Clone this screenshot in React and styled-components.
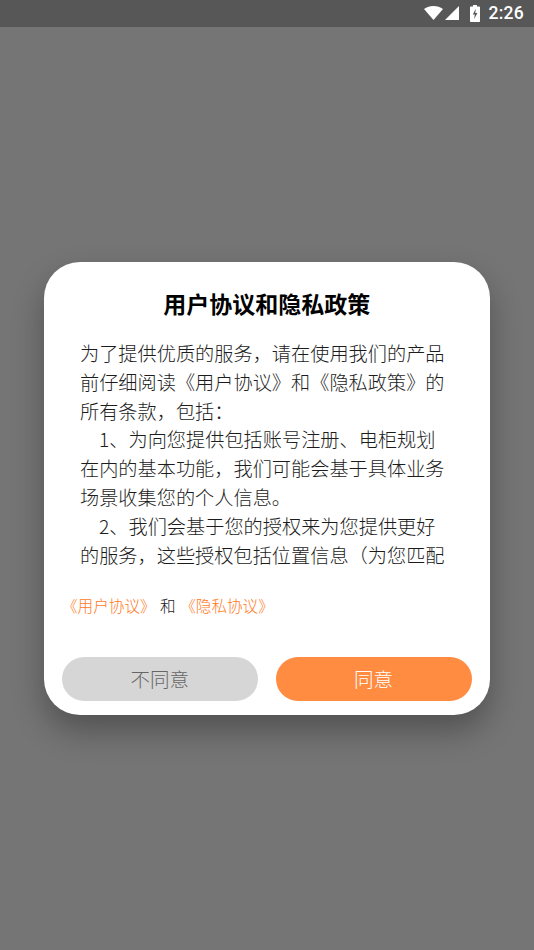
import styled, { createGlobalStyle } from "styled-components";

const GlobalStyle = createGlobalStyle`
    html, body {
        margin: 0;
        padding: 0;
        background: #757575;
    }
    * {
        box-sizing: border-box;
    }
`

const Page = styled.div`
    width: 534px;
    height: 950px;
    display: flex;
    flex-direction: column;
    overflow: hidden;
    background: #757575;
    font-family: "Roboto", "Noto Sans CJK SC", sans-serif;
`

const StatusBar = styled.div`
    height: 27px;
    flex-shrink: 0;
    display: flex;
    align-items: center;
    justify-content: flex-end;
    padding: 0 10px 1px 0;
    background: #575757;
    color: #fff;
`

const StatusIcon = styled.svg`
    margin-left: ${(props) => props.$left || 0}px;
    fill: #fff;
`

const Clock = styled.span`
    margin-left: 9px;
    font-size: 17.500px;
    font-weight: 500;
    letter-spacing: 0.25px;
`

const Overlay = styled.div`
    flex: 1;
    display: flex;
    padding: 235px 0 0 44px;
`

const Card = styled.div`
    width: 445.500px;
    height: 452.500px;
    display: flex;
    flex-direction: column;
    background: #fff;
    border-radius: 36px;
    box-shadow: 0 16px 32px rgba(0, 0, 0, 0.3);
`

const Title = styled.h2`
    margin: 25px 0 0;
    height: 32px;
    font-family: "Noto Sans CJK SC", sans-serif;
    font-size: 23px;
    line-height: 32px;
    font-weight: 700;
    text-align: center;
    color: #000;
`

const Body = styled.div`
    margin: 20px 0 0 36px;
    width: 366px;
    height: 230px;
    overflow: hidden;
    font-family: "Noto Sans CJK SC", sans-serif;
    font-size: 19.2px;
    font-weight: 300;
    line-height: 28.8px;
    color: #1c1c1c;
`

const Para = styled.p`
    margin: 0;
    text-indent: ${(props) => (props.$indent ? "19px" : "0")};
`

const Links = styled.div`
    margin: 25px 0 0 18px;
    display: flex;
    gap: 4.500px;
    font-family: "Noto Sans CJK SC", sans-serif;
    font-size: 15.600px;
    font-weight: 300;
    line-height: 22px;
    color: #1c1c1c;
`

const LinkText = styled.span`
    color: #ff7a24;
`

const Buttons = styled.div`
    margin: 41px 18px 0;
    display: flex;
    gap: 18px;
`

const Button = styled.div`
    flex: 1;
    height: 44px;
    display: flex;
    align-items: center;
    justify-content: center;
    border-radius: 22px;
    font-family: "Noto Sans CJK SC", sans-serif;
    font-size: 19.500px;
    font-weight: 300;
    padding-bottom: 2px;
    background: ${(props) => (props.$primary ? "#ff8c40" : "#d6d6d6")};
    color: ${(props) => (props.$primary ? "#fff" : "#666")};
`

const WifiIcon = () => (
    <StatusIcon width="19" height="14" viewBox="0 0 19 14">
        <path d="M0 3C2.700 1 5.900 0 9.500 0S16.300 1 19 3L9.500 14z" />
    </StatusIcon>
)

const SignalIcon = () => (
    <StatusIcon $left={2} width="14" height="14" viewBox="0 0 14 14">
        <path d="M14 0v14H0z" />
    </StatusIcon>
)

const BatteryIcon = () => (
    <StatusIcon $left={11} width="10" height="17" viewBox="0 0 10 17">
        <path d="M3 0h4v1.500h2.200a.8.8 0 0 1 .8.8v13.900a.8.8 0 0 1-.8.8H.8a.8.8 0 0 1-.8-.8V2.300a.8.8 0 0 1 .8-.8H3z" />
        <path d="M5.800 3.800 2.800 9.500h2L4.200 14l3.200-6H5.300z" fill="#575757" />
    </StatusIcon>
)

const App = () => {
    return (
        <Page>
            <GlobalStyle />
            <StatusBar>
                <WifiIcon />
                <SignalIcon />
                <BatteryIcon />
                <Clock>2:26</Clock>
            </StatusBar>
            <Overlay>
                <Card>
                    <Title>用户协议和隐私政策</Title>
                    <Body>
                        <Para>为了提供优质的服务，请在使用我们的产品前仔细阅读《用户协议》和《隐私政策》的所有条款，包括：</Para>
                        <Para $indent>1、为向您提供包括账号注册、电柜规划在内的基本功能，我们可能会基于具体业务场景收集您的个人信息。</Para>
                        <Para $indent>2、我们会基于您的授权来为您提供更好的服务，这些授权包括位置信息（为您匹配</Para>
                    </Body>
                    <Links>
                        <LinkText>《用户协议》</LinkText>
                        <span>和</span>
                        <LinkText>《隐私协议》</LinkText>
                    </Links>
                    <Buttons>
                        <Button>不同意</Button>
                        <Button $primary>同意</Button>
                    </Buttons>
                </Card>
            </Overlay>
        </Page>
    )
}

export default App;
